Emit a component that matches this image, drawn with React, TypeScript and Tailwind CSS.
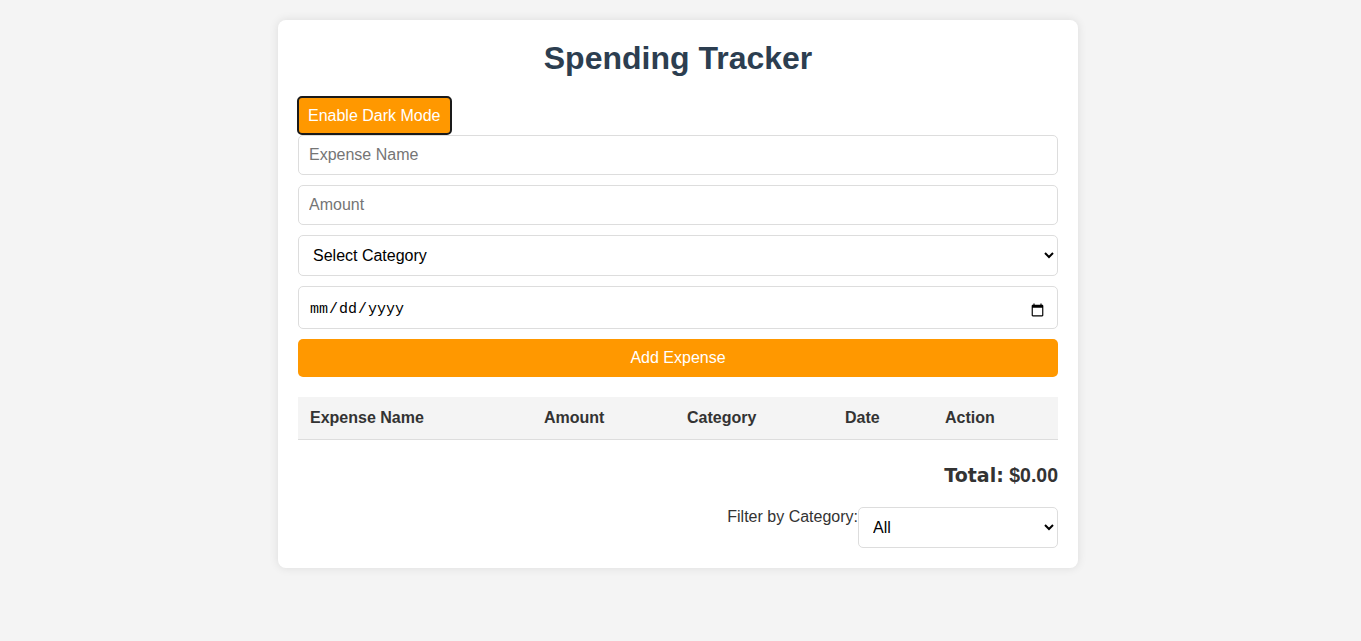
import React from "react";

const columns = [
  { label: "Expense Name", width: "w-[234px]" },
  { label: "Amount", width: "w-[143px]" },
  { label: "Category", width: "w-[158px]" },
  { label: "Date", width: "w-[100px]" },
  { label: "Action", width: "w-[125px]" },
];

const fieldClass =
  "block w-full h-[40px] px-[10px] border border-[#ddd] rounded-[5px] bg-white text-[16px] text-black placeholder:text-[#757575] outline-none";

export default function App() {
  return (
    <div className="min-h-screen bg-[#f4f4f4] pt-5 pr-[5px] font-['Liberation_Sans',Arial,sans-serif] text-[#333]">
      <div className="mx-auto w-[800px] rounded-lg bg-white p-5 shadow-[0_0_10px_rgba(0,0,0,0.1)]">
        <h1 className="mb-[19px] text-center text-[32px] font-bold leading-[37px] text-[#2c3e50]">
          Spending Tracker
        </h1>

        <button className="-ml-px h-[39px] rounded-[5px] border-2 border-[#1a1a1a] bg-[#ff9800] px-[9px] text-[16px] leading-[18px] text-white">
          Enable Dark Mode
        </button>

        <div className="flex flex-col gap-[10px]">
          <input type="text" placeholder="Expense Name" className={fieldClass} />
          <input type="number" placeholder="Amount" className={fieldClass} />
          <select
            defaultValue=""
            className="block h-[41px] w-full rounded-[5px] border border-[#ddd] bg-white px-[10px] text-[16px] text-black"
            style={{ appearance: "auto" }}
          >
            <option value="">Select Category</option>
            <option>Food</option>
            <option>Transport</option>
            <option>Entertainment</option>
          </select>
          <input
            type="date"
            className="block h-[43px] w-full rounded-[5px] border border-[#ddd] bg-white px-[10px] pt-[5px] font-['Liberation_Mono',monospace] text-[15px] text-black"
          />
          <button className="h-[38px] w-full rounded-[5px] bg-[#ff9800] text-[16px] text-white">
            Add Expense
          </button>
        </div>

        <table className="mt-5 w-full border-collapse">
          <thead>
            <tr className="border-b border-[#ddd] bg-[#f4f4f4]">
              {columns.map((c) => (
                <th
                  key={c.label}
                  className={`${c.width} h-[42px] px-3 text-left text-[16px] font-bold text-[#333]`}
                >
                  {c.label}
                </th>
              ))}
            </tr>
          </thead>
          <tbody></tbody>
        </table>

        <div className="mt-[24px] text-right text-[19.5px] font-bold leading-[22px] text-[#333]">
          <span className="font-['DejaVu_Sans',sans-serif] text-[19px]">Total:</span> $0.00
        </div>

        <div className="mt-[21px] flex items-start justify-end">
          <label className="pt-[1px] text-[16px] leading-[18px] text-[#333]">Filter by Category:</label>
          <select
            defaultValue="All"
            className="h-[41px] w-[200px] rounded-[5px] border border-[#ddd] bg-white px-[10px] text-[16px] text-black"
            style={{ appearance: "auto" }}
          >
            <option>All</option>
            <option>Food</option>
            <option>Transport</option>
            <option>Entertainment</option>
          </select>
        </div>
      </div>
    </div>
  );
}
